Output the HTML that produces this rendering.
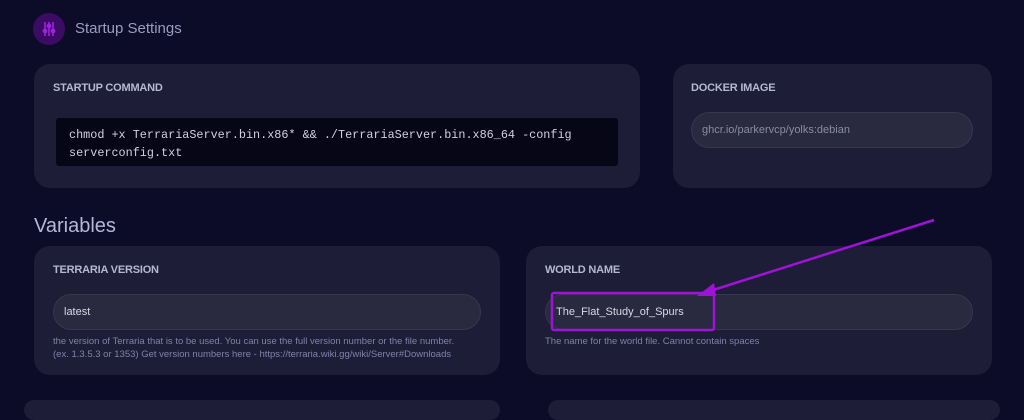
<!DOCTYPE html>
<html><head><meta charset="utf-8"><style>
*{margin:0;padding:0;box-sizing:border-box}
body{width:1024px;height:403px;background:#0c0c29;position:relative;overflow:hidden;font-family:"Liberation Sans",sans-serif}
.card{position:absolute;background:#1d1d37;border-radius:16px}
.lbl{position:absolute;font-size:11px;font-weight:bold;color:#b5b8d2;letter-spacing:-0.2px}
.inp{position:absolute;background:#292940;border:1px solid #36364f;border-radius:18px;height:36px;font-size:11px;color:#d8d8e6;padding-left:10px;line-height:34px}
.help{position:absolute;font-size:9.5px;color:#7f82a8;line-height:13px}
</style></head><body>
<div style="position:absolute;left:33px;top:13px;width:32px;height:32px;border-radius:50%;background:#3c0b63"></div>
<svg style="position:absolute;left:42px;top:21px" width="14" height="16" viewBox="0 0 14 16" stroke="#a020e0" stroke-width="1.6" fill="#a020e0"><line x1="3" y1="1" x2="3" y2="15"/><line x1="7" y1="1" x2="7" y2="15"/><line x1="11" y1="1" x2="11" y2="15"/><circle cx="3" cy="10" r="1.6"/><circle cx="7" cy="5" r="1.6"/><circle cx="11" cy="10" r="1.6"/></svg>
<div style="position:absolute;left:75px;top:20px;font-size:15px;color:#9a9dbf">Startup Settings</div>

<div class="card" style="left:34px;top:64px;width:606px;height:124px"></div>
<div class="lbl" style="left:53px;top:82px">STARTUP COMMAND</div>
<div style="position:absolute;left:56px;top:118px;width:562px;height:48px;background:#060617;border-radius:3px;font-family:'Liberation Mono',monospace;font-size:11.8px;color:#d0d0dc;padding:8px 0 0 13px;line-height:18px;white-space:nowrap">chmod +x TerrariaServer.bin.x86* &amp;&amp; ./TerrariaServer.bin.x86_64 -config<br>serverconfig.txt</div>

<div class="card" style="left:673px;top:64px;width:319px;height:124px"></div>
<div class="lbl" style="left:691px;top:82px">DOCKER IMAGE</div>
<div class="inp" style="left:691px;top:112px;width:282px;color:#8a8ca4">ghcr.io/parkervcp/yolks:debian</div>

<div style="position:absolute;left:34px;top:215px;font-size:20px;color:#b4b8d8">Variables</div>

<div class="card" style="left:34px;top:246px;width:466px;height:129px"></div>
<div class="lbl" style="left:53px;top:264px">TERRARIA VERSION</div>
<div class="inp" style="left:53px;top:294px;width:428px">latest</div>
<div class="help" style="left:53px;top:335px">the version of Terraria that is to be used. You can use the full version number or the file number.<br>(ex. 1.3.5.3 or 1353) Get version numbers here - https://terraria.wiki.gg/wiki/Server#Downloads</div>

<div class="card" style="left:526px;top:246px;width:466px;height:129px"></div>
<div class="lbl" style="left:545px;top:264px">WORLD NAME</div>
<div class="inp" style="left:545px;top:294px;width:428px">The_Flat_Study_of_Spurs</div>
<div class="help" style="left:545px;top:335px">The name for the world file. Cannot contain spaces</div>

<div class="card" style="left:24px;top:400px;width:476px;height:20px"></div>
<div class="card" style="left:548px;top:400px;width:452px;height:20px"></div>

<svg style="position:absolute;left:0;top:0" width="1024" height="403">
<rect x="552" y="293" width="162" height="37" rx="2" fill="none" stroke="#a012d8" stroke-width="2.5"/>
<line x1="934" y1="220" x2="710" y2="291" stroke="#a012d8" stroke-width="2.5"/>
<polygon points="697,296 714,283 716,296" fill="#a012d8"/>
</svg>
</body></html>
